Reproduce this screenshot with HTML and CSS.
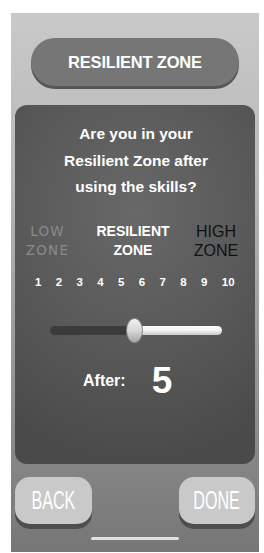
FILE: index.html
```
<!DOCTYPE html>
<html>
<head>
<meta charset="utf-8">
<link rel="stylesheet" href="styles.css">
</head>
<body>
<div class="screen">
  <div class="title-btn">RESILIENT ZONE</div>
  <div class="card">
    <div class="question">Are you in your<br>Resilient Zone after<br>using the skills?</div>
    <div class="zones">
      <div class="zone low">LOW<br>ZONE</div>
      <div class="zone mid">RESILIENT<br>ZONE</div>
      <div class="zone high">HIGH<br>ZONE</div>
    </div>
    <div class="numbers">
      <span>1</span><span>2</span><span>3</span><span>4</span><span>5</span><span>6</span><span>7</span><span>8</span><span>9</span><span>10</span>
    </div>
    <div class="slider">
      <div class="track"><div class="fill-left" style="width:80px"></div><div class="fill-right"></div></div>
      <div class="thumb" style="left:76px"></div>
    </div>
    <div class="after">
      <span class="after-label">After:</span>
      <span class="after-value">5</span>
    </div>
  </div>
  <div class="bottom">
    <div class="nav-btn back"><span>BACK</span></div>
    <div class="nav-btn done"><span>DONE</span></div>
  </div>
  <div class="home"></div>
</div>
</body>
</html>
```
FILE: styles.css
```
html, body {
  margin: 0;
  padding: 0;
  background: #fff;
}
body {
  width: 264px;
  height: 553px;
  overflow: hidden;
  font-family: "Liberation Sans", Arial, sans-serif;
}
.screen {
  margin: 13px 0 0 11px;
  width: 248px;
  height: 539px;
  background: linear-gradient(to bottom, #c9c9c9 0%, #b9b9b9 30%, #979797 65%, #767676 100%);
  display: flex;
  flex-direction: column;
  align-items: flex-start;
  box-sizing: border-box;
  padding-top: 25px;
}
.title-btn {
  margin-left: 20px;
  width: 208px;
  height: 48px;
  border-radius: 24px;
  background: #767676;
  box-shadow: 0 3px 0 #555;
  color: #fff;
  font-weight: bold;
  font-size: 16.5px;
  display: flex;
  align-items: center;
  justify-content: center;
  letter-spacing: -0.2px;
}
.card {
  margin: 19px 0 0 4px;
  width: 240px;
  height: 359px;
  border-radius: 12px;
  background: radial-gradient(ellipse 90% 70% at 50% 30%, #686868 0%, #5a5a5a 50%, #4a4a4a 100%);
  box-sizing: border-box;
  padding-top: 16px;
  display: flex;
  flex-direction: column;
}
.question {
  color: #fff;
  font-weight: bold;
  font-size: 15.5px;
  line-height: 26.5px;
  text-align: center;
  padding-left: 2px;
}
.zones {
  margin-top: 21px;
  display: grid;
  grid-template-columns: 65px 106px 60px;
  line-height: 19px;
  text-align: center;
}
.zone.low {
  color: #8a8a8a;
  font-family: "DejaVu Sans", sans-serif;
  font-size: 13.5px;
  letter-spacing: 1.2px;
}
.zone.mid {
  color: #fff;
  font-weight: bold;
  font-size: 14px;
}
.zone.high {
  color: #111;
  font-size: 16px;
}
.numbers {
  margin-top: 15.5px;
  padding-left: 20px;
  display: flex;
  line-height: 14px;
  color: #fff;
  font-weight: bold;
  font-size: 11.5px;
}
.numbers span {
  width: 20.75px;
  flex: none;
}
.slider {
  position: relative;
  margin: 28.5px 0 0 35px;
  width: 172px;
  height: 25px;
  display: flex;
  align-items: center;
}
.track {
  width: 172px;
  height: 9px;
  border-radius: 4.5px;
  display: flex;
  overflow: hidden;
}
.fill-left {
  background: #3b3b3b;
  height: 100%;
}
.fill-right {
  flex: 1;
  height: 100%;
  background: linear-gradient(to bottom, #ffffff 0%, #f2f2f2 50%, #c8c8c8 100%);
}
.thumb {
  position: absolute;
  top: 0;
  width: 17px;
  height: 25px;
  border-radius: 50%;
  box-sizing: border-box;
  border: 1px solid #888;
  background: linear-gradient(to bottom, #f0f0f0 0%, #d8d8d8 50%, #a5a5a5 100%);
}
.after {
  margin-top: 18px;
  padding-left: 68px;
  display: flex;
  align-items: center;
  height: 40px;
  color: #fff;
  font-weight: bold;
}
.after-label {
  font-size: 16px;
}
.after-value {
  margin-left: 26px;
  font-size: 37px;
}
.bottom {
  margin: 13px 0 0 4px;
  width: 240px;
  display: flex;
  justify-content: space-between;
}
.nav-btn {
  height: 47px;
  border-radius: 15px;
  background: #c9c9c9;
  box-shadow: 0 5px 0 #4e4e4e;
  color: #fff;
  font-size: 26px;
  display: flex;
  align-items: center;
  justify-content: center;
}
.nav-btn span {
  display: inline-block;
  transform: scaleX(0.62);
}
.nav-btn.back {
  width: 77px;
}
.nav-btn.done {
  width: 76px;
}
.home {
  margin: 13px 0 0 80px;
  width: 88px;
  height: 3px;
  border-radius: 2px;
  background: #e0e0e0;
}
```
